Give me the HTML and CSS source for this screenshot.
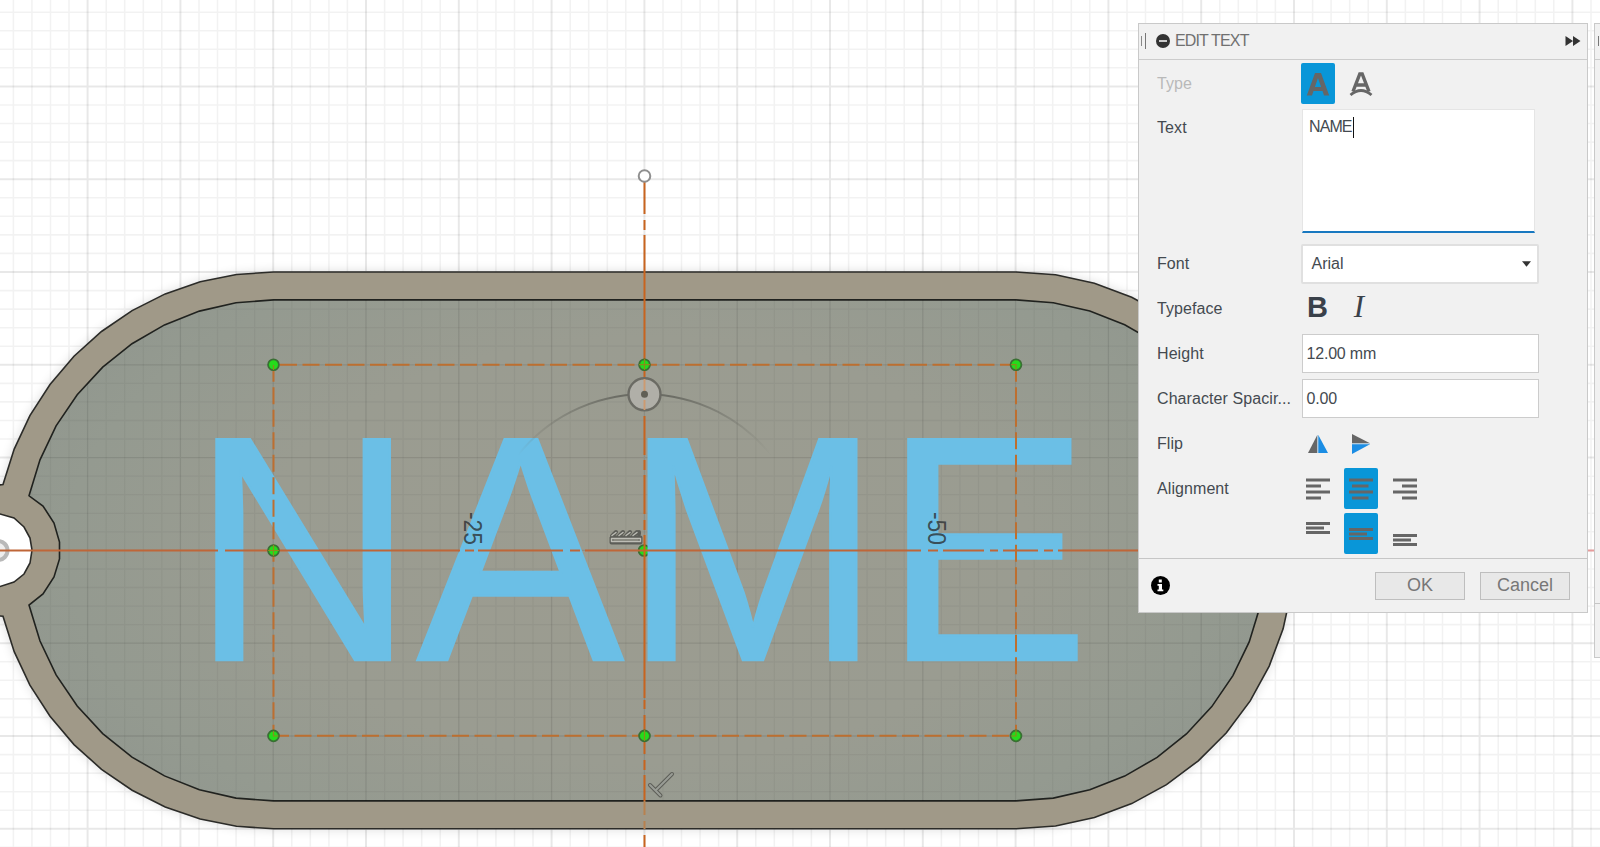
FILE: index.html
```
<!DOCTYPE html>
<html lang="en">
<head>
<meta charset="utf-8">
<title>Edit Text</title>
<link rel="stylesheet" href="styles.css">
</head>
<body>
<div class="workspace">
<svg class="canvas" id="canvas" width="1600" height="847" viewBox="0 0 1600 847">
  <defs>
    <radialGradient id="face" gradientUnits="userSpaceOnUse" cx="644" cy="550" r="640" gradientTransform="translate(0 247.500) scale(1 .55)">
      <stop offset="0" stop-color="#9c9c90"/><stop offset=".6" stop-color="#9a9c91"/><stop offset=".9" stop-color="#949a90"/><stop offset="1" stop-color="#92988f"/>
    </radialGradient>
    <linearGradient id="arcfade"><stop offset="0" stop-color="#6b6c64" stop-opacity="0"/><stop offset=".4" stop-color="#6b6c64"/><stop offset=".6" stop-color="#6b6c64"/><stop offset="1" stop-color="#6b6c64" stop-opacity="0"/></linearGradient>
    <filter id="soft" x="-5%" y="-5%" width="110%" height="110%"><feGaussianBlur stdDeviation="6"/></filter>
  </defs>
  <g id="gridBack"></g>
  <path id="shadow" class="shadow" filter="url(#soft)"/>
  <path id="outer" class="rim"/>
  <path id="inner" class="face"/>
  <g id="gridFront"></g>
  <polygon class="hole" points="-8,514 0,514 14,518 24,527 30,538 32,550 30,563 24,574 14,582 0,586.5 -8,586.5"/>
  <circle class="origin" cx="-2" cy="550.5" r="9.5"/>
  <g class="grips"><circle cx="644" cy="550.5" r="5.4"/></g>
  <text class="big" id="big" transform="translate(0 660) scale(.967 1)" x="197.5 431 644.5 913">NAME</text>
  <g class="ruler"><text transform="translate(464 512) rotate(90) scale(.88 1)">-25</text><text transform="translate(928 512) rotate(90) scale(.88 1)">-50</text></g>
  <path class="axis" d="M0 550.5H218M225 550.5H460M465 550.5H474M478 550.5H563M570 550.5H580M585 550.5H921M928 550.5H938M943 550.5H984M990 550.5H998M1003 550.5H1038M1044 550.5H1053M1058 550.5H1588"/>
  <path class="axis far" d="M1588 550.5h12"/>
  <path class="box" d="M280 364.7H1016M272 735.7H1016M273.5 364.7V735.7M1016 364.7V735.7"/>
  <path class="axis bright" d="M644.5 182v32M644.5 220v10M644.5 235v128M644.5 365v29M644.5 401v10M644.5 416v39M644.5 460v10M644.5 475v39M644.5 520v10M644.5 535v163M644.5 700v9M644.5 715v39M644.5 760v10M644.5 775v26"/>
  <path class="axis bright faint" d="M644.5 801v14M644.5 821v8"/>
  <path class="axis bright" d="M644.5 835v12"/>
  <path class="arc" d="M518 455A162 162 0 0 1 771 455"/>
  <circle class="knob" cx="644.5" cy="394.3" r="16"/><path class="axis knobline" d="M644.5 379v13M644.5 400v10"/><circle class="knobdot" cx="644.5" cy="394.3" r="3.5"/>
  <circle class="handle" cx="644.5" cy="176" r="5.8"/>
  <g class="grips"><circle cx="273.5" cy="364.7" r="5.4"/><circle cx="644.5" cy="364.7" r="5.4"/><circle cx="1016" cy="364.7" r="5.4"/><circle cx="273.5" cy="550.5" r="5.4"/><circle cx="273.5" cy="735.9" r="5.4"/><circle cx="644.5" cy="735.9" r="5.4"/><circle cx="1016" cy="735.9" r="5.4"/></g>
  <path class="ticks" d="M273.5 365v5M1011 364.7h5v5M268 550.5h11M273.5 545v11M644.5 359v11M639 364.7h11M273.5 731v5h5M644.5 730v11M1016 730v6h-5"/>
  <g class="glyph"><path class="edge" d="M611.5 537.5v5h29v-5zM612 536l4-4M619 536l4-4M626 536l4-4M633 536l4-4M639 534v-2"/><path class="core" d="M611.5 538.5h29v3h-29zM612 535.500l4-3M619 535.500l4-3M626 535.500l4-3M633 535.500l4-3"/></g>
  <g class="glyph"><path class="edge" d="M650 785l10.500 10.500M656 790l16-16"/><path class="core thin" d="M650 785l10.500 10.500M656 790l16-16"/></g>
</svg>

<section class="panel">
  <header class="head">
    <span class="grab"></span>
    <svg width="14" height="14" viewBox="0 0 14 14"><circle cx="7" cy="7" r="7" fill="#333"/><path d="M3 7h8" stroke="#ddd" stroke-width="1.8"/></svg>
    <h1>EDIT TEXT</h1>
    <svg class="more" width="16" height="10" viewBox="0 0 16 10"><path d="M.5 0l7.500 5-7.500 5zM8 0l7.500 5L8 10z" fill="#333"/></svg>
  </header>
  <div class="rows">
    <div class="row type"><span class="label dim">Type</span>
      <i class="btn on"><svg width="24" height="26" viewBox="0 0 24 26"><path fill="#666" fill-rule="evenodd" d="M.8 24.500L9 2h6l8.200 22.500h-5.200l-1.500-4.500h-9l-1.500 4.500zM8.900 16h6.200L12 7z"/></svg></i>
      <i class="btn"><svg width="24" height="26" viewBox="0 0 24 26" fill="none" stroke="#666"><path stroke-width="3.400" d="M4 20.500L10.800 3h2.400l6.800 17.500M7.500 14h9"/><path stroke-width="2.800" d="M1.500 24Q12 15 22.500 24"/></svg></i></div>
    <div class="row text"><span class="label">Text</span><div class="area">NAME<b class="caret"></b></div></div>
    <div class="row"><span class="label">Font</span><div class="select">Arial<svg width="9" height="6" viewBox="0 0 10 6"><path d="M0 0h10L5 6z" fill="#333"/></svg></div></div>
    <div class="row"><span class="label">Typeface</span><i class="btn bold">B</i><i class="btn ital">I</i></div>
    <div class="row"><span class="label">Height</span><div class="input">12.00 mm</div></div>
    <div class="row"><span class="label">Character Spacir...</span><div class="input">0.00</div></div>
    <div class="row"><span class="label">Flip</span>
      <i class="btn"><svg width="20" height="18" viewBox="0 0 20 18"><path d="M9.300 0v18H0z" fill="#666"/><path d="M9.300 0h1v18h-1z" fill="#a8c4d8"/><path d="M10.300 0v18H20z" fill="#1b8de4"/></svg></i>
      <i class="btn"><svg width="18" height="20" viewBox="0 0 18 20"><path d="M0 0v9.300h18z" fill="#666"/><path d="M0 9.300h18v1H0z" fill="#a8c4d8"/><path d="M0 10.300h18L0 20z" fill="#1b8de4"/></svg></i></div>
    <div class="row"><span class="label">Alignment</span>
      <i class="btn"><svg width="24" height="22" viewBox="0 0 24 22"><path class="bars" d="M0 2h24M0 8h15M0 14h24M0 20h15"/></svg></i>
      <i class="btn on"><svg width="24" height="22" viewBox="0 0 24 22"><path class="bars" d="M0 2h24M3 8h16.500M0 14h24M3 20h16.500"/></svg></i>
      <i class="btn"><svg width="24" height="22" viewBox="0 0 24 22"><path class="bars" d="M0 2h24M9 8h15M0 14h24M9 20h15"/></svg></i></div>
    <div class="row"><span class="label"></span>
      <i class="btn"><svg width="24" height="26" viewBox="0 0 24 26"><path class="bars" d="M0 2.500h24M0 7h18M0 11.500h24"/></svg></i>
      <i class="btn on"><svg width="24" height="26" viewBox="0 0 24 26"><path class="bars" d="M0 8.500h24M0 13h18M0 17.500h24"/></svg></i>
      <i class="btn"><svg width="24" height="26" viewBox="0 0 24 26"><path class="bars" d="M0 14.500h24M0 19h18M0 23.500h24"/></svg></i></div>
  </div>
  <footer class="foot">
    <svg width="19" height="19" viewBox="0 0 19 19"><circle cx="9.500" cy="9.500" r="9.500" fill="#000"/><path d="M7.800 3.500h3v3h-3zM6.500 8h4.500v5.500h1.300v1.700H6.500v-1.700h1.300V9.700H6.500z" fill="#fff"/></svg>
    <button>OK</button><button>Cancel</button>
  </footer>
</section>
<aside class="next"><span class="nexthead"></span><span class="nextfoot"></span></aside>
</div>
<script src="scene.js"></script>
</body>
</html>
```

FILE: styles.css
```
* { box-sizing: border-box; }
body { margin: 0; overflow: hidden; background: #fff; font-family: "Liberation Sans", Arial, sans-serif; }
.workspace { position: relative; width: 1600px; height: 847px; overflow: hidden; }
.canvas { display: block; }
.minor { stroke: #000; stroke-opacity: .05; stroke-width: 1.6; }
.major { stroke: #000; stroke-opacity: .09; stroke-width: 2; }
.front .minor { stroke-opacity: .04; stroke-width: 1.3; }
.front .major { stroke-opacity: .09; stroke-width: 1.3; }
.shadow { fill: #000; opacity: .15; }
.rim { fill: #a09988; stroke: #2b2b28; stroke-width: 1.6; }
.face { fill: url(#face); stroke: #20221f; stroke-width: 1.6; }
.hole { fill: #fff; stroke: #2b2b28; stroke-width: 1.6; }
.origin { fill: #eee; stroke: #b9b9b9; stroke-width: 4; }
.ruler { font-size: 26px; fill: #2c3032; fill-opacity: .8; }
.big { font-size: 321px; fill: #6bbfe6; stroke: #6bbfe6; stroke-width: 2.4; filter: blur(.6px); }
.axis { stroke: #bf6638; stroke-width: 1.9; fill: none; }
.axis.far { stroke: #e89a9a; }
.axis.bright { stroke: #c8641f; stroke-width: 2; }
.axis.faint { stroke: #b8814f; }
.axis.knobline { stroke: #cd9a70; }
.box { fill: none; stroke: #bd6f30; stroke-width: 2; stroke-dasharray: 17 5.5; }
.arc { fill: none; stroke: url(#arcfade); stroke-width: 2; }
.knob { fill: #b0afa8; stroke: #6b6b64; stroke-width: 2.4; }
.knobdot { fill: #605f55; }
.handle { fill: #fff; stroke: #8f8f8f; stroke-width: 2; }
.grips circle { fill: #24dc1b; stroke: #397033; stroke-width: 1.8; }
.ticks { stroke: #8a8b1d; stroke-width: 1.2; fill: none; }
.glyph path { fill: none; stroke-linecap: round; stroke-linejoin: round; }
.glyph .edge { stroke: #5c5d57; stroke-width: 4; }
.glyph .core { stroke: #bdbdb5; stroke-width: 1.4; }
.glyph .edge + .thin { stroke: #999c95; stroke-width: 2; }

.panel { position: absolute; left: 1138px; top: 23px; width: 450px; height: 590px; display: flex; flex-direction: column; background: #f1f1f1; border: 1.5px solid #c9c9c9; color: #444a50; }
.head { height: 36px; display: flex; align-items: center; border-bottom: 1px solid #ccc; padding: 0 6px 1px 2px; }
.grab { width: 5px; height: 16px; border-right: 1.5px solid #777; background: linear-gradient(#888, #888) 0 3px / 1px 10px no-repeat; margin-right: 10px; }
.head h1 { margin: 0 0 0 5px; font-size: 16px; font-weight: 400; color: #707070; letter-spacing: -.85px; }
.more { margin-left: auto; }
.rows { flex: 1; display: flex; flex-direction: column; padding: 1px 0 0 18px; }
.row { height: 45px; flex: none; display: flex; align-items: center; }
.row.text { height: 135px; align-items: flex-start; }
.row.text .label { padding-top: 13px; }
.label { width: 143.5px; font-size: 16px; white-space: nowrap; letter-spacing: .08px; }
.dim { color: #b9b9b9; }
.btn { width: 34px; height: 41px; margin-right: 9.500px; display: flex; align-items: center; justify-content: center; font-style: normal; border-radius: 2px; }
.on { background: #0996d8; }
.bars { stroke: #666; stroke-width: 3; }
.bold { font-size: 29px; font-weight: 700; color: #3a414a; padding-bottom: 3px; }
.ital { font: italic 31px "Liberation Serif", serif; color: #3a414a; padding: 0 4px 3px 0; }
.area { width: 233px; height: 124px; margin: 3px 0 0 1.5px; background: #fff; border: 1px solid #e5e5e5; border-bottom: 2px solid #1878c0; padding: 8px 6px; font-size: 16px; display: flex; letter-spacing: -.9px; }
.caret { width: 1.5px; height: 21px; background: #111; margin: -1px 0 0 1px; }
.select { width: 238px; height: 40px; background: #fff; border: 2px solid #e0e0e0; border-radius: 2px; display: flex; align-items: center; justify-content: space-between; padding: 0 6px 0 9px; font-size: 16px; }
.input { width: 237px; height: 39px; margin-left: 1px; background: #fff; border: 1.500px solid #ccc; padding: 0 4px; display: flex; align-items: center; font-size: 16px; letter-spacing: -.2px; }
.foot { height: 54px; display: flex; align-items: center; border-top: 1px solid #c6c6c6; padding: 0 17px 0 12px; }
.foot button { width: 90px; height: 28px; padding: 0; border: 1.500px solid #bebebe; background: #e8e8e8; color: #777; font: 18px "Liberation Sans", sans-serif; margin-left: 15px; }
.foot svg { margin-right: auto; }
.next { position: absolute; left: 1594px; top: 23px; width: 20px; height: 635px; background: #f1f1f1; border: 1px solid #c9c9c9; display: flex; flex-direction: column; justify-content: space-between; }
.nexthead { height: 36px; border-bottom: 1px solid #ccc; background: linear-gradient(#777, #777) 3px 12px / 1px 10px no-repeat; }
.nextfoot { height: 54px; border-top: 1px solid #c6c6c6; }
```

FILE: scene.js
```
(function () {
  const rad = Math.PI / 180, cy = 550.4, lx = 273.5, rx = 1016;
  // Point on a tag end; angle is measured from the vertical.
  const pt = (cx, r, a) => [cx + r * Math.sin(a * rad), cy - r * Math.cos(a * rad)];
  const run = (cx, r, from, step, n) => Array.from({ length: n + 1 }, (_, i) => pt(cx, r, from + i * step));
  const toPath = p => 'M' + p.map(q => q.map(v => v.toFixed(1)).join(' ')).join('L') + 'Z';

  const outer = [].concat(
    [[-10, 486]], run(lx, 278.4, -76.3, 7.63, 10),
    run(rx, 278.4, 0, 180 / 22, 22),
    run(lx, 278.4, 180, 7.63, 10), [[-10, 614.8]]);
  const inner = [].concat(
    run(lx, 250.5, -77.4, 8.6, 9),
    run(rx, 250.5, 0, 180 / 21, 21),
    run(lx, 250.5, 180, 8.6, 9),
    [[43, 594], [54, 577], [59.5, 559], [59.5, 542], [54, 523], [43, 506]]);
  const set = (id, d) => document.getElementById(id).setAttribute('d', d);
  set('outer', toPath(outer));
  set('shadow', toPath(outer));
  set('inner', toPath(inner));

  function lines() {
    let minor = '', major = '';
    for (let i = -35; i < 55; i++) {
      const x = (644.4 + i * 18.56).toFixed(1), y = (550.4 + i * 18.56).toFixed(1);
      const d = 'M' + x + ' 0V847M0 ' + y + 'H1600';
      if (i % 5 === 0) major += d; else minor += d;
    }
    return '<path class="minor" d="' + minor + '"/><path class="major" d="' + major + '"/>';
  }
  document.getElementById('gridBack').innerHTML = lines();
  document.getElementById('gridFront').innerHTML =
    '<clipPath id="clip"><path d="' + toPath(inner) + '"/></clipPath><g class="front" clip-path="url(#clip)">' + lines() + '</g>';
})();
```
